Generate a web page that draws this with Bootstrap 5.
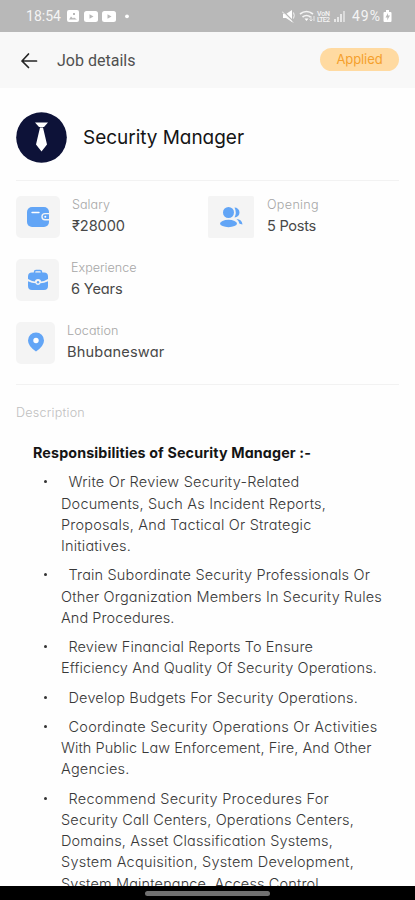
<!DOCTYPE html>
<html lang="en">
<head>
<meta charset="utf-8">
<meta name="viewport" content="width=device-width, initial-scale=1">
<title>Job details</title>
<link href="https://cdn.jsdelivr.net/npm/bootstrap@5.3.0/dist/css/bootstrap.min.css" rel="stylesheet">
<style>
body{font-family:Inter,"Noto Sans",sans-serif;font-feature-settings:"cv11";background:#fefefe;color:#444;height:900px;overflow:hidden}
[data-w]{display:inline-block;white-space:pre}
.status{height:32px;background:#b8b8b8;color:#f4f4f4;font:14px/32px Roboto,sans-serif;padding:0 23px 0 26px}
.status svg{display:block}
.notices{margin-left:6px}
.battery{margin-left:2px}
.topbar{height:56px;background:#f8f8f8;padding:0 16px 0 20px}
.topbar h1{font:16px/20px Roboto,sans-serif;color:#505050;margin:2px 0 0 18px}
.applied{width:79px;height:23px;border-radius:12px;background:#ffdaa1;color:#f5a02c;font-size:13px;line-height:22px;text-align:center;margin-bottom:2px}
.jobhead{height:93px;margin:0 16px;padding-top:24px;border-bottom:1px solid #f2f2f2}
.avatar{width:51px;height:51px}
.jobname{font-size:19px;line-height:28px;color:#151515;margin-left:16px}
.facts{height:204px;margin:0 16px;padding-top:15px;border-bottom:1px solid #f2f2f2}
.fact{height:42px;margin-bottom:21px}
.fact-first{width:192px}
.tile{height:42px;border-radius:5px;background:#f4f4f4;flex:none}
.t44{width:44px;margin-right:12px}.t42{width:43px;margin-right:12px}.t38{width:39px;margin-right:12px}.t46{width:46px;margin-right:13px;border-radius:2px}
.cap{font-size:12.6px;line-height:18px;color:#a6a6a6;font-weight:300}
.val{font-size:14.6px;line-height:24px;color:#484848}
.desc{font-size:12.6px;line-height:18px;color:#c0c0c0;font-weight:300;margin:19px 16px 0;height:18px}
.resp{font-size:14.3px;line-height:22px;font-weight:700;color:#151515;margin:20px 0 0 33px;height:22px}
.duties{margin:7.4px 0 0;padding:0 0 0 61px;list-style:none;font-size:14.5px;line-height:21.2px;font-weight:300;color:#383838}
.duties li{margin-bottom:8.2px;position:relative}
.duties li::before{content:"";position:absolute;left:-17.5px;top:9px;width:3px;height:3px;border-radius:50%;background:#333}
.duties .ln{display:block;height:21.2px}
.duties .ln:first-child{padding-left:7.5px}
.screen{height:886px;overflow:hidden}
.homebar{height:14px;background:#000}
.homebar div{width:125px;height:5px;border-radius:3px;background:#707070}
</style>
<script src="https://cdn.jsdelivr.net/npm/bootstrap@5.3.0/dist/js/bootstrap.bundle.min.js"></script>
</head>
<body>
<div class="screen">
<div class="status d-flex align-items-center justify-content-between">
  <div class="d-flex align-items-center">
    <span data-w="35">18:54</span>
    <svg class="notices" width="64" height="14" viewBox="0 0 64 14"><rect x="0" y="1" width="12" height="12" rx="2" fill="#fff"/><path d="M2 10.500l2-3 2 2 1-1 3 2zM6 4h2v2H6z" fill="#b8b8b8"/><rect x="17" y="2" width="14" height="11" rx="2.500" fill="#fff"/><path d="M22.500 5.300l4 2.200-4 2.200z" fill="#b8b8b8"/><rect x="35" y="2" width="14" height="11" rx="2.500" fill="#fff"/><path d="M40.500 5.300l4 2.200-4 2.200z" fill="#b8b8b8"/><circle cx="60" cy="7.300" r="1.900" fill="#fff"/></svg>
  </div>
  <div class="d-flex align-items-center">
    <svg width="66" height="16" viewBox="0 0 66 16" fill="none" stroke="#f4f4f4"><path d="M1 6h3l6-4v12l-6-4H1z" fill="#fff" stroke="none"/><path d="M0 2l12 12" stroke="#b8b8b8" stroke-width="1.300"/><path d="M0 3.500l11 11" stroke-width="1"/><path d="M11.500 4.500q1.500 3 0 6" stroke-width="1"/><path d="M18 6q6.500-5 13 0M20.500 9q4-3 8 0" stroke-width="1.700"/><path d="M22.500 10.500h4l-2 2.500z" fill="#fff" stroke="none"/><path d="M29 8v5m-1.500-1.500L29 13l1.500-1.500M32 13V8" stroke-width=".8"/><g fill="#f4f4f4" stroke="none" font-family="Roboto" font-weight="500" font-size="7"><text x="35" y="7.500" textLength="13">VoN</text><text x="35" y="14" textLength="13">LTE2</text></g><path d="M53 14v-3M56 14V9M59 14V6" stroke-width="1.900" stroke="#e8e8e8"/><path d="M62 14V3" stroke-width="1.900" stroke="#dcdcdc"/></svg>
    <span class="ms-1" data-w="29">49%</span>
    <svg class="battery" width="9" height="14" viewBox="0 0 9 14"><path d="M3 1h3v2h1.500q1 0 1 1v8q0 1-1 1h-6q-1 0-1-1V4q0-1 1-1H3z" fill="#fff"/><path d="M5 4L2.500 8.500h2L4 11.500l3-5H5z" fill="#b8b8b8"/></svg>
  </div>
</div>
<div class="topbar d-flex align-items-center">
  <svg width="19" height="18" viewBox="0 0 19 18" fill="none" stroke="#252525" stroke-width="1.700" stroke-linecap="round" stroke-linejoin="round"><path d="M8.500 3L2 10l6.500 6.500M2 10h14.500"/></svg>
  <h1><span data-w="78.5">Job details</span></h1>
  <div class="applied ms-auto"><span data-w="46">Applied</span></div>
</div>
<div class="jobhead d-flex align-items-start">
  <svg class="avatar" viewBox="0 0 51 51"><circle cx="25.500" cy="25.500" r="25.300" fill="#0d1238"/><path d="M19 10.500h13l-4 4.500h-5zM24 15.500h3l4 17-5.500 7-5.500-7z" fill="#fff"/></svg>
  <div class="jobname mt-2 pt-1"><span data-w="161">Security Manager</span></div>
</div>
<div class="facts">
  <div class="d-flex">
    <div class="fact fact-first d-flex">
      <div class="tile t44 d-flex align-items-center justify-content-center"><svg width="24" height="22" viewBox="0 0 24 22"><rect x="1" y="1" width="22" height="20" rx="5" fill="#62a5f6"/><path d="M6 6.500h7" stroke="#fff" stroke-width="1.400" stroke-linecap="round"/><path d="M24 7h-5a3.700 3.700 0 0 0 0 7.400h5z" fill="#f4f4f4"/><path d="M23 8.300h-4a2.300 2.300 0 0 0 0 4.700h4z" fill="#62a5f6"/><circle cx="19.300" cy="10.700" r="1" fill="#fff"/></svg></div>
      <div><div class="cap"><span data-w="38">Salary</span></div><div class="val"><span data-w="53">₹28000</span></div></div>
    </div>
    <div class="fact d-flex">
      <div class="tile t46 d-flex align-items-center justify-content-center"><svg width="24" height="22" viewBox="0 0 24 22" fill="#62a5f6"><circle cx="9.500" cy="6.500" r="5.500"/><ellipse cx="9.500" cy="17.500" rx="8.500" ry="3.700"/><path d="M15.500 1.500a5 5 0 0 1 0 10q2.500-5 0-10zM17.500 13q5.500.3 6 5.500l-3-.8q-.5-2.800-3-4.700z"/></svg></div>
      <div><div class="cap"><span data-w="52">Opening</span></div><div class="val"><span data-w="49">5 Posts</span></div></div>
    </div>
  </div>
  <div class="fact d-flex">
    <div class="tile t42 d-flex align-items-center justify-content-center"><svg width="22" height="23" viewBox="0 0 22 23"><path d="M7.500 4V3q0-1.500 1.500-1.500h4q1.500 0 1.500 1.500v1" fill="none" stroke="#62a5f6" stroke-width="1.500"/><path d="M5 3.500h12q4 0 4 4V10q-4.500 2.500-7 2.500a3 2.500 0 0 0-6 0Q5.500 12.500 1 10V7.500q0-4 4-4zM1 12.300q4 2 7.500 2a2.700 2.700 0 0 0 5 0q3.500 0 7.500-2V17q0 4-4 4H5q-4 0-4-4z" fill="#62a5f6"/><circle cx="11" cy="13.300" r="1.200" fill="#62a5f6"/></svg></div>
    <div><div class="cap"><span data-w="65.5">Experience</span></div><div class="val"><span data-w="51.5">6 Years</span></div></div>
  </div>
  <div class="fact d-flex">
    <div class="tile t38 d-flex align-items-center justify-content-center"><svg width="18" height="22" viewBox="0 0 18 22"><path d="M9 .500a8 8 0 0 1 8 8q0 5.500-8 11Q1 14 1 8.500a8 8 0 0 1 8-8z" fill="#62a5f6"/><circle cx="9" cy="8.500" r="2.700" fill="#fff"/></svg></div>
    <div><div class="cap"><span data-w="51.5">Location</span></div><div class="val"><span data-w="97.5">Bhubaneswar</span></div></div>
  </div>
</div>
<div class="desc"><span data-w="69">Description</span></div>
<div class="resp"><span data-w="278">Responsibilities of Security Manager :-</span></div>
<ul class="duties">
  <li><span class="ln"><span data-w="231">Write Or Review Security-Related</span></span><span class="ln"><span data-w="265">Documents, Such As Incident Reports,</span></span><span class="ln"><span data-w="250.5">Proposals, And Tactical Or Strategic</span></span><span class="ln"><span data-w="70">Initiatives.</span></span></li>
  <li><span class="ln"><span data-w="301.5">Train Subordinate Security Professionals Or</span></span><span class="ln"><span data-w="321">Other Organization Members In Security Rules</span></span><span class="ln"><span data-w="113.5">And Procedures.</span></span></li>
  <li><span class="ln"><span data-w="244.5">Review Financial Reports To Ensure</span></span><span class="ln"><span data-w="316">Efficiency And Quality Of Security Operations.</span></span></li>
  <li><span class="ln"><span data-w="289.5">Develop Budgets For Security Operations.</span></span></li>
  <li><span class="ln"><span data-w="309">Coordinate Security Operations Or Activities</span></span><span class="ln"><span data-w="310.5">With Public Law Enforcement, Fire, And Other</span></span><span class="ln"><span data-w="68.5">Agencies.</span></span></li>
  <li><span class="ln"><span data-w="260.5">Recommend Security Procedures For</span></span><span class="ln"><span data-w="293">Security Call Centers, Operations Centers,</span></span><span class="ln"><span data-w="272">Domains, Asset Classification Systems,</span></span><span class="ln"><span data-w="293">System Acquisition, System Development,</span></span><span class="ln"><span data-w="262">System Maintenance, Access Control,</span></span></li>
</ul>
</div>
<div class="homebar d-flex align-items-center justify-content-center"><div></div></div>
<script>
// Track each line of text to its measure by adjusting the letter spacing.
document.querySelectorAll('[data-w]').forEach(function (el) {
  var extra = el.dataset.w - el.getBoundingClientRect().width;
  el.style.letterSpacing = (extra / el.textContent.length).toFixed(3) + 'px';
});
</script>
</body>
</html>
